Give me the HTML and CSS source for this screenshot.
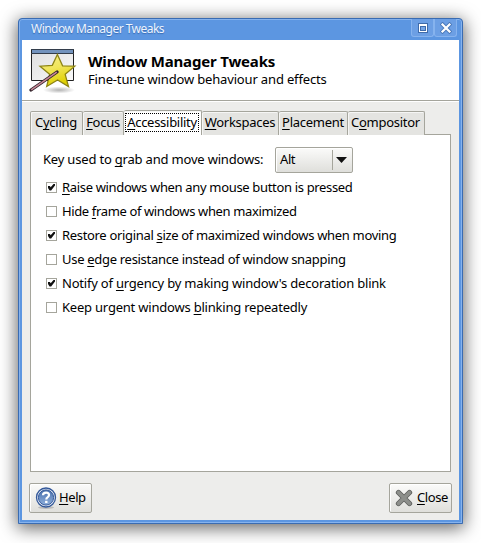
FILE: index.html
```html
<!DOCTYPE html>
<html lang="en">
<head>
<meta charset="utf-8">
<title>Window Manager Tweaks</title>
<link rel="stylesheet" href="styles.css">
</head>
<body>
<main class="window">
  <header class="titlebar">
    <span class="title">Window Manager Tweaks</span>
    <div class="controls">
      <span class="control"><svg width="12" height="12" viewBox="0 0 12 12"><path fill="#3f6baa" d="M1 1h10v10H1z"/><path fill="#fff" d="M2 2h8v8H2z"/><path fill="#3f6baa" d="M3 4h6v5H3z"/><path fill="#76a5e5" d="M4 5h4v3H4z"/></svg></span>
      <span class="control"><svg width="12" height="12" viewBox="0 0 12 12"><path d="M2.5 2.5l7 7m0-7l-7 7" stroke="#4a78b8" stroke-width="4" stroke-linecap="square"/><path d="M2.5 2.5l7 7m0-7l-7 7" stroke="#fff" stroke-width="2.2" stroke-linecap="square"/></svg></span>
    </div>
  </header>
  <div class="content">
    <section class="banner">
      <svg class="banner-icon" width="48" height="48" viewBox="0 0 48 48">
        <defs>
          <linearGradient id="paper" x2="1" y2="1"><stop stop-color="#dedede"/><stop offset="1" stop-color="#fafafa"/></linearGradient>
          <linearGradient id="gold" x2="0.3" y2="1"><stop stop-color="#f5ee8e"/><stop offset=".5" stop-color="#f0e55a"/><stop offset="1" stop-color="#dfd000"/></linearGradient>
          <radialGradient id="shade"><stop stop-color="#000" stop-opacity=".3"/><stop offset="1" stop-color="#000" stop-opacity="0"/></radialGradient>
        </defs>
        <path d="M2.500 2.500h42v31h-42z" fill="url(#paper)" stroke="#222"/>
        <path d="M3 3h41v3H3z" fill="#7393bd"/><path d="M2 2.500h43M2 6.500h43" stroke="#333d4b"/>
        <ellipse cx="30" cy="43" rx="16" ry="3.500" fill="url(#shade)"/>
        <path transform="translate(.7 .3)" d="M27.700 7.200l5.200 11.300 12.200.4-9.600 8.100 3.300 12.200-10.900-6.500-10.900 6.500 2.900-12.200-9.600-8.100 12.300-.9z" fill="url(#gold)" stroke="#8d8415" stroke-width="1.300"/>
        <path d="M2 43L28 25" stroke="#30222a" stroke-width="3.200" stroke-linecap="round"/>
        <path d="M2.200 42.800L27.800 25.100" stroke="#c98996" stroke-width="1.600"/>
      </svg>
      <div class="banner-text">
        <h1>Window Manager Tweaks</h1>
        <p>Fine-tune window behaviour and effects</p>
      </div>
    </section>
    <nav class="tabs">
      <span class="tab tab-cycling">C<u>y</u>cling</span>
      <span class="tab tab-focus"><u>F</u>ocus</span>
      <span class="tab tab-active"><span class="focus-ring"><u>A</u>ccessibility</span></span>
      <span class="tab tab-workspaces"><u>W</u>orkspaces</span>
      <span class="tab tab-placement"><u>P</u>lacement</span>
      <span class="tab tab-compositor">C<u>o</u>mpositor</span>
    </nav>
    <section class="panel">
      <div class="key-row">
        <span class="key-label">Key used to <u>g</u>rab and move windows:</span>
        <div class="combo"><span class="combo-value">Alt</span><span class="combo-arrow"><svg width="11" height="6" viewBox="0 0 11 6"><path d="M0 0h11L5.500 6z" fill="#111"/></svg></span></div>
      </div>
      <div class="options">
        <label class="option raise"><span class="box checked"></span><span><u>R</u>aise windows when any mouse button is pressed</span></label>
        <label class="option hide"><span class="box"></span><span>Hide <u>f</u>rame of windows when maximized</span></label>
        <label class="option restore"><span class="box checked"></span><span>Restore original <u>s</u>ize of maximized windows when moving</span></label>
        <label class="option resist"><span class="box"></span><span>Use <u>e</u>dge resistance instead of window snapping</span></label>
        <label class="option notify"><span class="box checked"></span><span>Notify of <u>u</u>rgency by making window's decoration blink</span></label>
        <label class="option keep"><span class="box"></span><span>Keep urgent windows <u>b</u>linking repeatedly</span></label>
      </div>
    </section>
    <footer class="actions">
      <div class="button help">
        <svg width="22" height="22" viewBox="0 0 22 22"><defs><linearGradient id="blue" x2="0" y2="1"><stop stop-color="#4a70ad"/><stop offset="1" stop-color="#8fb0dc"/></linearGradient></defs><ellipse cx="11" cy="20.500" rx="8" ry="1.500" fill="#bbb"/><circle cx="11" cy="10.500" r="9.500" fill="#e8eef8" stroke="#34599a" stroke-width="1.300"/><circle cx="11" cy="10.500" r="7.600" fill="url(#blue)" stroke="#34599a"/><path d="M8 8.300Q8 5.700 11.100 5.700Q14 5.700 14 8.100Q14 9.500 12.500 10.400Q11.300 11.100 11.300 12.500" fill="none" stroke="#fff" stroke-width="2.200"/><path d="M10.100 13.800h2.400v2.200h-2.400z" fill="#fff"/></svg>
        <span><u>H</u>elp</span>
      </div>
      <div class="button close">
        <svg width="18" height="18" viewBox="0 0 18 18"><path d="M3.500 3.500l11 11m0-11l-11 11" stroke="#60625f" stroke-width="5.300" stroke-linecap="round"/><path d="M3.500 3.500l11 11m0-11l-11 11" stroke="#8d8f8b" stroke-width="3.600" stroke-linecap="round"/></svg>
        <span><u>C</u>lose</span>
      </div>
    </footer>
  </div>
</main>
</body>
</html>
```
FILE: styles.css
```css
* { box-sizing: border-box; }
body {
  margin: 0;
  width: 481px;
  height: 543px;
  overflow: hidden;
  padding: 18px;
  background: #fff;
  color: #000;
  font: 13px/18px "Noto Sans", sans-serif;
  letter-spacing: -0.4px;
  white-space: nowrap;
}
u { text-underline-offset: 2px; text-decoration-thickness: 1px; text-decoration-skip-ink: none; }
svg { display: block; flex: none; fill: none; }
.window {
  width: 445px;
  height: 506px;
  border: 1px solid #3a6cb2;
  border-radius: 4px 4px 0 0;
  background: #5c96e1;
  box-shadow: inset 0 0 0 1px #86b3ee, 0 3px 17px 1px rgba(0, 0, 0, 0.62);
  padding: 0 3px 3px;
}
.titlebar {
  height: 21px;
  display: flex;
  justify-content: space-between;
  padding-left: 9px;
}
.title {
  font-size: 12px;
  line-height: 20px;
  letter-spacing: -0.53px;
  color: #eef5ff;
  text-shadow: 0 1px 1px #3a6cb2;
}
.controls { display: flex; margin-right: 2px; }
.control {
  width: 23px;
  height: 18px;
  display: grid;
  place-items: center;
  border: 1px solid #86b3ee;
  border-top: 0;
  border-radius: 0 0 3px 3px;
  background: #6c9fe4;
}
.content { width: 437px; height: 480px; background: #ededeb; }
.banner {
  height: 62px;
  display: flex;
  align-items: flex-start;
  background: #fff;
  border-bottom: 1px solid #fff;
  box-shadow: inset 0 -1px #a5a59c;
  padding: 7px 0 0 7px;
}
.banner-text { margin: 5px 0 0 11px; }
h1 { margin: 0; font-size: 15px; line-height: 19px; letter-spacing: -0.18px; }
p { margin: 0; line-height: 17px; letter-spacing: -0.16px; }
.tabs { display: flex; align-items: flex-end; height: 33px; margin-left: 8px; letter-spacing: -0.28px; }
.tab {
  height: 24px;
  border: 1px solid #a5a59c;
  border-left-width: 0;
  border-bottom: 0;
  border-radius: 2px 2px 0 0;
  background: #e4e4e1;
  box-shadow: inset 1px 1px #f6f6f5;
  line-height: 20px;
  text-align: center;
}
.tab-cycling { width: 53px; border-left-width: 1px; padding-right: 1px; }
.tab-focus { width: 41px; }
.tab-active {
  position: relative;
  z-index: 1;
  width: 78px;
  height: 25px;
  padding: 2px 2px 0 1px;
  background: #fff;
}
.focus-ring { display: block; height: 19px; line-height: 16px; border: 1px dotted #000; }
.tab-workspaces { width: 77px; }
.tab-placement { width: 69px; }
.tab-compositor { width: 77px; padding-right: 1px; }
.panel {
  width: 421px;
  height: 338px;
  margin: -1px 0 0 8px;
  border: 1px solid #a5a59c;
  background: #fff;
  padding: 12px 0 0 12px;
}
.key-row { display: flex; align-items: center; height: 26px; }
.key-label { width: 232px; letter-spacing: -0.19px; line-height: 16px; padding-bottom: 2px; }
.combo, .button {
  border: 1px solid #a5a59c;
  border-radius: 2px;
  background: linear-gradient(#fbfbfa, #dfdfdb);
  box-shadow: inset 1px 1px #fff;
  display: flex;
  align-items: center;
}
.combo { width: 78px; height: 26px; padding-left: 4px; }
.combo-value { width: 52px; padding-bottom: 2px; }
.combo-arrow { display: grid; place-items: center start; padding-left: 3px; height: 20px; border-left: 1px solid #a5a59c; }
.options { margin: 2px 0 0 3px; }
.option { display: flex; align-items: center; height: 24px; }
.raise { letter-spacing: -0.335px; }
.hide { letter-spacing: -0.37px; }
.restore { letter-spacing: -0.325px; }
.resist { letter-spacing: -0.3px; }
.notify { letter-spacing: -0.205px; }
.keep { letter-spacing: -0.21px; }
.box { width: 11px; height: 11px; border: 1px solid #a5a59c; margin-right: 5px; background: #fff; }
.checked { display: grid; place-items: center; }
.checked::before {
  content: "";
  width: 7px;
  height: 7px;
  background: #111;
  clip-path: polygon(0 35%, 28% 35%, 38% 55%, 85% 0, 100% 0, 100% 28%, 45% 100%, 22% 100%, 0 65%);
}
.actions { display: flex; justify-content: space-between; padding: 11px 7px 0; }
.button { width: 63px; height: 30px; }
.button span { padding-bottom: 2px; }
.help { padding-left: 5px; gap: 2px; }
.close { padding-left: 5px; gap: 4px; }
```
